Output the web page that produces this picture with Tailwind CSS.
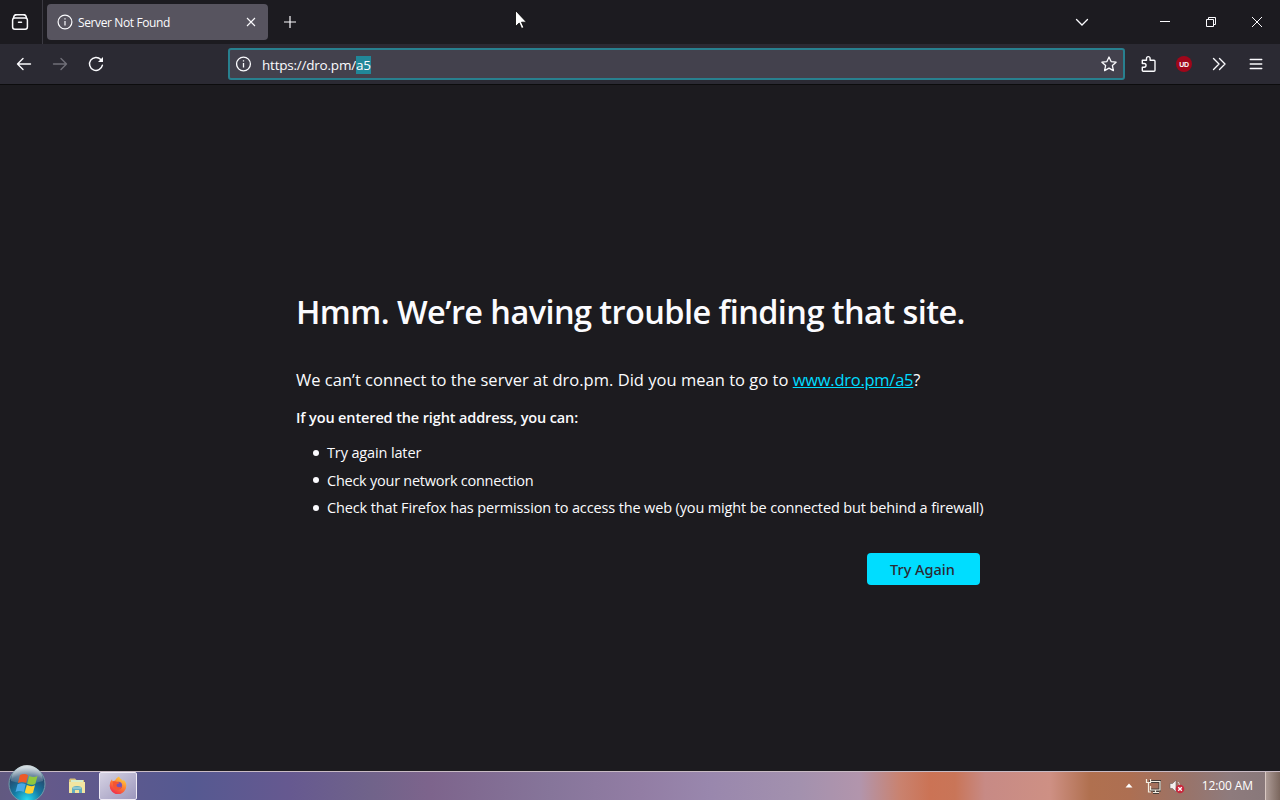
<!doctype html>
<html lang="en">
<head>
    <meta charset="UTF-8">
    <meta name="viewport" content="width=device-width, initial-scale=1.0">
    <title>Server Not Found</title>
    <script src="https://cdn.jsdelivr.net/npm/@tailwindcss/browser@4"></script>
</head>
<body class="relative flex h-screen flex-col overflow-hidden bg-[#1c1b22] font-['Open_Sans','Noto_Sans',sans-serif] text-[#fbfbfe]">

    <!-- Tab bar -->
    <header class="flex h-11 shrink-0 items-center bg-[#1c1b20]">
        <button class="flex h-11 w-[43px] shrink-0 items-center border-r border-[#3b3a42] pl-[11px]" aria-label="Firefox View">
            <svg class="h-[18px] w-[18px]" viewBox="0 0 18 18" fill="none" stroke="currentColor" stroke-width="1.5" stroke-linecap="round">
                <path d="M4.500 1.800h9" />
                <rect x="1.600" y="5" width="14.800" height="11.200" rx="2.200" />
                <path d="M2.500 5.200C2.800 2.800 3.600 1.800 5 1.800M15.500 5.200C15.200 2.800 14.400 1.800 13 1.800M7.500 9.200h3" />
            </svg>
        </button>
        <div class="ml-1 flex h-9 w-[221px] shrink-0 items-center rounded bg-[#57545f] pl-2.5 pr-[11px]">
            <svg class="h-4 w-4 shrink-0" viewBox="0 0 16 16" fill="none" stroke="currentColor" stroke-width="1.2">
                <circle cx="8" cy="8" r="6.9" />
                <path d="M8 7v4.500M8 4.300v1.300" />
            </svg>
            <span class="ml-[5px] flex-1 whitespace-nowrap pt-0.5 text-[12px] tracking-[-0.38px]">Server Not Found</span>
            <svg class="h-3 w-3" viewBox="0 0 12 12" fill="none" stroke="currentColor" stroke-width="1.1"><path d="M2 2l8 8M10 2l-8 8" /></svg>
        </div>
        <svg class="ml-[15px] h-3.5 w-3.5" viewBox="0 0 14 14" fill="none" stroke="currentColor" stroke-width="1.2"><path d="M7 1v12M1 7h12" /></svg>
        <div class="ml-auto flex items-center">
            <svg class="mr-[70px] h-3.5 w-3.5" viewBox="0 0 14 14" fill="none" stroke="currentColor" stroke-width="1.300" stroke-linecap="round"><path d="M1.500 4.500L7 10l5.500-5.500" /></svg>
            <svg class="mr-[34px] h-3 w-3" viewBox="0 0 12 12" stroke="currentColor"><path d="M1 5.500h10" /></svg>
            <svg class="mr-[34px] h-3 w-3" viewBox="0 0 12 12" fill="none" stroke="currentColor"><path d="M1.500 3.500h7v7h-7zM3.500 3.500v-2h7v7h-2" /></svg>
            <svg class="mr-[17px] h-3 w-3" viewBox="0 0 12 12" fill="none" stroke="currentColor"><path d="M1 1l10 10M11 1L1 11" /></svg>
        </div>
    </header>

    <!-- Navigation toolbar -->
    <nav class="flex h-[41px] shrink-0 items-center border-b border-[#0c0c0d] bg-[#2b2a33]">
        <svg class="ml-4 h-4 w-4" viewBox="0 0 16 16" fill="none" stroke="currentColor" stroke-width="1.400" stroke-linecap="round" stroke-linejoin="round"><path d="M14.500 8h-13M7 2.500L1.500 8 7 13.500" /></svg>
        <svg class="ml-5 h-4 w-4 text-[#706f78]" viewBox="0 0 16 16" fill="none" stroke="currentColor" stroke-width="1.400" stroke-linecap="round" stroke-linejoin="round"><path d="M1.500 8h13M9 2.500L14.500 8 9 13.500" /></svg>
        <svg class="ml-5 h-4 w-4" viewBox="0 0 16 16" fill="none" stroke="currentColor" stroke-width="1.500" stroke-linecap="round">
            <path d="M14.400 9.200A6.500 6.500 0 1 1 12.800 3.500" />
            <path d="M15 1v5h-5z" fill="currentColor" stroke="none" />
        </svg>
        <div class="ml-[124px] flex h-8 w-[897px] items-center rounded-[3px] border-2 border-[#28808f] bg-[#43414d] px-1.5">
            <svg class="h-4 w-4 shrink-0" viewBox="0 0 16 16" fill="none" stroke="currentColor" stroke-width="1.300">
                <circle cx="7.500" cy="8" r="6.900" />
                <path d="M7.500 7v4.500M7.500 4.300v1.300" />
            </svg>
            <p class="ml-2.5 flex-1 whitespace-nowrap pt-0.5 text-[13.500px] leading-[18px] tracking-[-0.22px]">https://dro.pm/<span class="bg-[#218799]">a5</span></p>
            <svg class="h-4 w-4" viewBox="0 0 16 16" fill="none" stroke="currentColor" stroke-width="1.300" stroke-linejoin="round"><path d="M8 1l2.100 4.600 5 .600-3.700 3.400 1 5L8 12.100l-4.400 2.500 1-5L.900 6.200l5-.600z" /></svg>
        </div>
        <!-- Extensions -->
        <svg class="ml-[15px] h-[18px] w-[18px]" viewBox="0 0 18 18" fill="none" stroke="currentColor" stroke-width="1.400" stroke-linejoin="round"><path d="M2.300 8.500V5.200h4.200V3.400a1.800 1.800 0 0 1 3.600 0v1.800h3.900q1 0 1 1v9q0 1-1 1H3.300q-1 0-1-1V12.200h1.900a1.850 1.850 0 0 0 0-3.700z" /></svg>
        <div class="ml-[18px] flex h-4 w-4 items-center justify-center rounded-full bg-[#a0061a]">
            <span class="font-['Liberation_Sans',sans-serif] text-[7px] font-bold leading-none tracking-[-0.3px]">UD</span>
        </div>
        <svg class="ml-[19px] h-4 w-4" viewBox="0 0 16 16" fill="none" stroke="currentColor" stroke-width="1.400" stroke-linecap="round" stroke-linejoin="round"><path d="M2.500 2.500L8 8l-5.500 5.500M8.500 2.500L14 8l-5.500 5.500" /></svg>
        <svg class="ml-[21px] h-4 w-4" viewBox="0 0 16 16" stroke="currentColor" stroke-width="1.300" stroke-linecap="round"><path d="M2.200 3.500h11.600M2.200 8h11.600M2.200 12.500h11.600" /></svg>
    </nav>

    <!-- Error page -->
    <main class="flex-1 bg-[#1c1b1f] pl-[296px] pt-[203px]">
        <div class="w-[688px] whitespace-nowrap">
            <h1 class="text-[32.500px] font-semibold leading-[48px] tracking-[-0.58px]">Hmm. We’re having trouble finding that site.</h1>
            <p class="mt-8 text-[16.500px] leading-6 tracking-[0.02px]">We can’t connect to the server at dro.pm. Did you mean to go to <a href="#" class="tracking-[-0.25px] text-[#00ddff] underline">www.dro.pm/a5</a>?</p>
            <p class="mt-[14px] text-[14.500px] font-semibold leading-6 tracking-[-0.13px]">If you entered the right address, you can:</p>
            <ul class="mt-[9px] text-[14.500px] leading-[27.500px] tracking-[-0.135px]">
                <li class="flex items-center"><span class="ml-[17px] mr-2 h-1.5 w-1.5 shrink-0 rounded-full bg-[#fbfbfe]"></span>Try again later</li>
                <li class="flex items-center tracking-[-0.25px]"><span class="ml-[17px] mr-2 h-1.5 w-1.5 shrink-0 rounded-full bg-[#fbfbfe]"></span>Check your network connection</li>
                <li class="flex items-center"><span class="ml-[17px] mr-2 h-1.5 w-1.5 shrink-0 rounded-full bg-[#fbfbfe]"></span>Check that Firefox has permission to access the web (you might be connected but behind a firewall)</li>
            </ul>
            <div class="mt-[31px] flex justify-end pr-1">
                <button class="h-8 w-[113px] rounded bg-[#00ddff] pr-0.5 pt-0.5 font-['Noto_Sans','Open_Sans',sans-serif] text-[14.500px] font-medium text-[#2b2a33]">Try Again</button>
            </div>
        </div>
    </main>

    <!-- Windows taskbar -->
    <footer class="flex h-[29px] shrink-0 items-center border-t border-[#c9bbc5] bg-[linear-gradient(90deg,#615980_0,#64598a_45px,#555991_190px,#665990_290px,#70638a_370px,#7d648c_430px,#86759a_550px,#927da4_640px,#9987ad_710px,#a391ae_800px,#b295ac_860px,#c9826f_900px,#cb7355_930px,#c97558_955px,#c78a85_985px,#ce9084_1050px,#b0704f_1090px,#ad6f52_1130px,#98746b_1190px,#8e7b7d_1230px,#867779_1280px)]">
        <svg class="-mt-1.5 ml-2 h-[37px] w-[38px] shrink-0" viewBox="0 0 38 37">
            <defs>
                <radialGradient id="orb" cx=".5" cy=".95" r=".95"><stop offset="0" stop-color="#28dcf2" /><stop offset=".4" stop-color="#157ca5" /><stop offset=".75" stop-color="#244b70" /><stop offset="1" stop-color="#9aafb8" /></radialGradient>
                <linearGradient id="shine" x1="0" y1="0" x2="0" y2="1"><stop offset="0" stop-color="#fff" stop-opacity=".7" /><stop offset="1" stop-color="#fff" stop-opacity=".1" /></linearGradient>
            </defs>
            <circle cx="19" cy="19" r="18" fill="url(#orb)" stroke="#719baa" />
            <path d="M3 16a16 16 0 0 1 32 0q-16 5-32 0z" fill="url(#shine)" />
            <path d="M12 10q4.500-2 8 .200L18.200 18q-4.200-2-8.300 0z" fill="#ed5a29" />
            <path d="M21.200 11q4.300 2.200 8.300 0L27.300 19q-4.300 1.800-8.200-.200z" fill="#91c83e" />
            <path d="M9.500 19.300q4.200-2 8.200 0L15.700 27q-4.200-2-8.200 0z" fill="#48a8e6" />
            <path d="M18.800 20q4.200 2.200 8.200.200l-2.100 7.800q-4.200 1.800-8.100-.400z" fill="#ffd233" />
        </svg>
        <svg class="ml-[22px] h-[18px] w-[18px] shrink-0" viewBox="0 0 18 18">
            <path d="M1 3l1-1.500h5L8.500 3H16v12H1z" fill="#d9c478" />
            <path d="M3 3h12v4H3z" fill="#d7edcd" />
            <path d="M1 5h16v11H1z" fill="#f2e5a0" />
            <path d="M4 16v-4q0-3 5-3t5 3v4h-3v-3H7v3z" fill="#63adc0" />
            <path d="M5 11h8" stroke="#b6e2e5" />
        </svg>
        <div class="ml-[13px] flex h-7 w-[38px] shrink-0 items-center justify-center rounded-[2px] border border-[#eeeaf5] bg-linear-to-br from-[#d6d2e3] to-[#9d98bd] pb-0.5">
            <svg class="h-[18px] w-[18px]" viewBox="0 0 18 18">
                <defs><linearGradient id="fox" x1=".8" y1="0" x2=".2" y2="1"><stop offset="0" stop-color="#ffdc3f" /><stop offset=".45" stop-color="#ff8230" /><stop offset="1" stop-color="#ee244f" /></linearGradient></defs>
                <path d="M10 .5q1 2.300 3 3.200Q14 5 14.500 5l-.300-1.500Q17.500 6 17.300 10A8.300 8.300 0 0 1 .700 10Q.500 6 3 3.300l.500 2L6 4.500Q7.500 1.500 10 .5z" fill="url(#fox)" />
                <circle cx="9.300" cy="9.500" r="3.800" fill="#7553b5" />
                <path d="M3.500 5.500q3-.700 5 .500l2 .500q-.5 1.500-2.500 1.500-1.500 3 2 3.200 1.500 0 2.800-1-1 4-4.800 3.500Q3.500 13 4 8z" fill="#f45531" />
            </svg>
        </div>
        <div class="ml-auto flex h-full items-center">
            <svg class="mr-3 h-2 w-2" viewBox="0 0 8 8" fill="#fff"><path d="M4 1.500L7.500 5.500h-7z" /></svg>
            <svg class="mr-2 h-4 w-4" viewBox="0 0 16 16" fill="none">
                <path d="M4 3.500h11v8.500H5M8 14.500h6M10.500 12v2.500" stroke="#463d39" stroke-width="3" />
                <path d="M6 3.500h9v8.500H5.500V8M8 14.500h6M10.500 12v2.500M1.500 1v3.500h4V1M3.500 4.500v9.500H6" stroke="#f4eee2" stroke-width="1.200" />
            </svg>
            <svg class="mr-[17px] h-4 w-4" viewBox="0 0 16 16">
                <path d="M1 5.500h2.500L7 2v12l-3.500-3.500H1z" fill="#f2eeee" stroke="#6d5e5c" stroke-width=".6" />
                <path d="M9 4q1.500 1.500 1.500 3.500" fill="none" stroke="#ddd" />
                <circle cx="11" cy="11" r="4.300" fill="#c9263b" />
                <path d="M9.200 9.200l3.600 3.600M12.800 9.200l-3.600 3.600" stroke="#fff" stroke-width="1.300" />
            </svg>
            <span class="whitespace-nowrap text-[12px] tracking-[-0.1px] text-white">12:00 AM</span>
            <div class="ml-3 h-full w-[15px] border-l border-[#d9c8c2] bg-linear-to-r from-[#bcaaa2]/70 to-[#766052]/70"></div>
        </div>
    </footer>

    <!-- Mouse pointer -->
    <svg class="absolute left-[515px] top-[10px] h-[20px] w-3" viewBox="0 0 12 20"><path d="M.500.500v16l3.700-3.500 2.400 5.500 2.300-1-2.400-5.300h5z" fill="#fff" stroke="#000" stroke-width=".8" /></svg>
</body>
</html>
